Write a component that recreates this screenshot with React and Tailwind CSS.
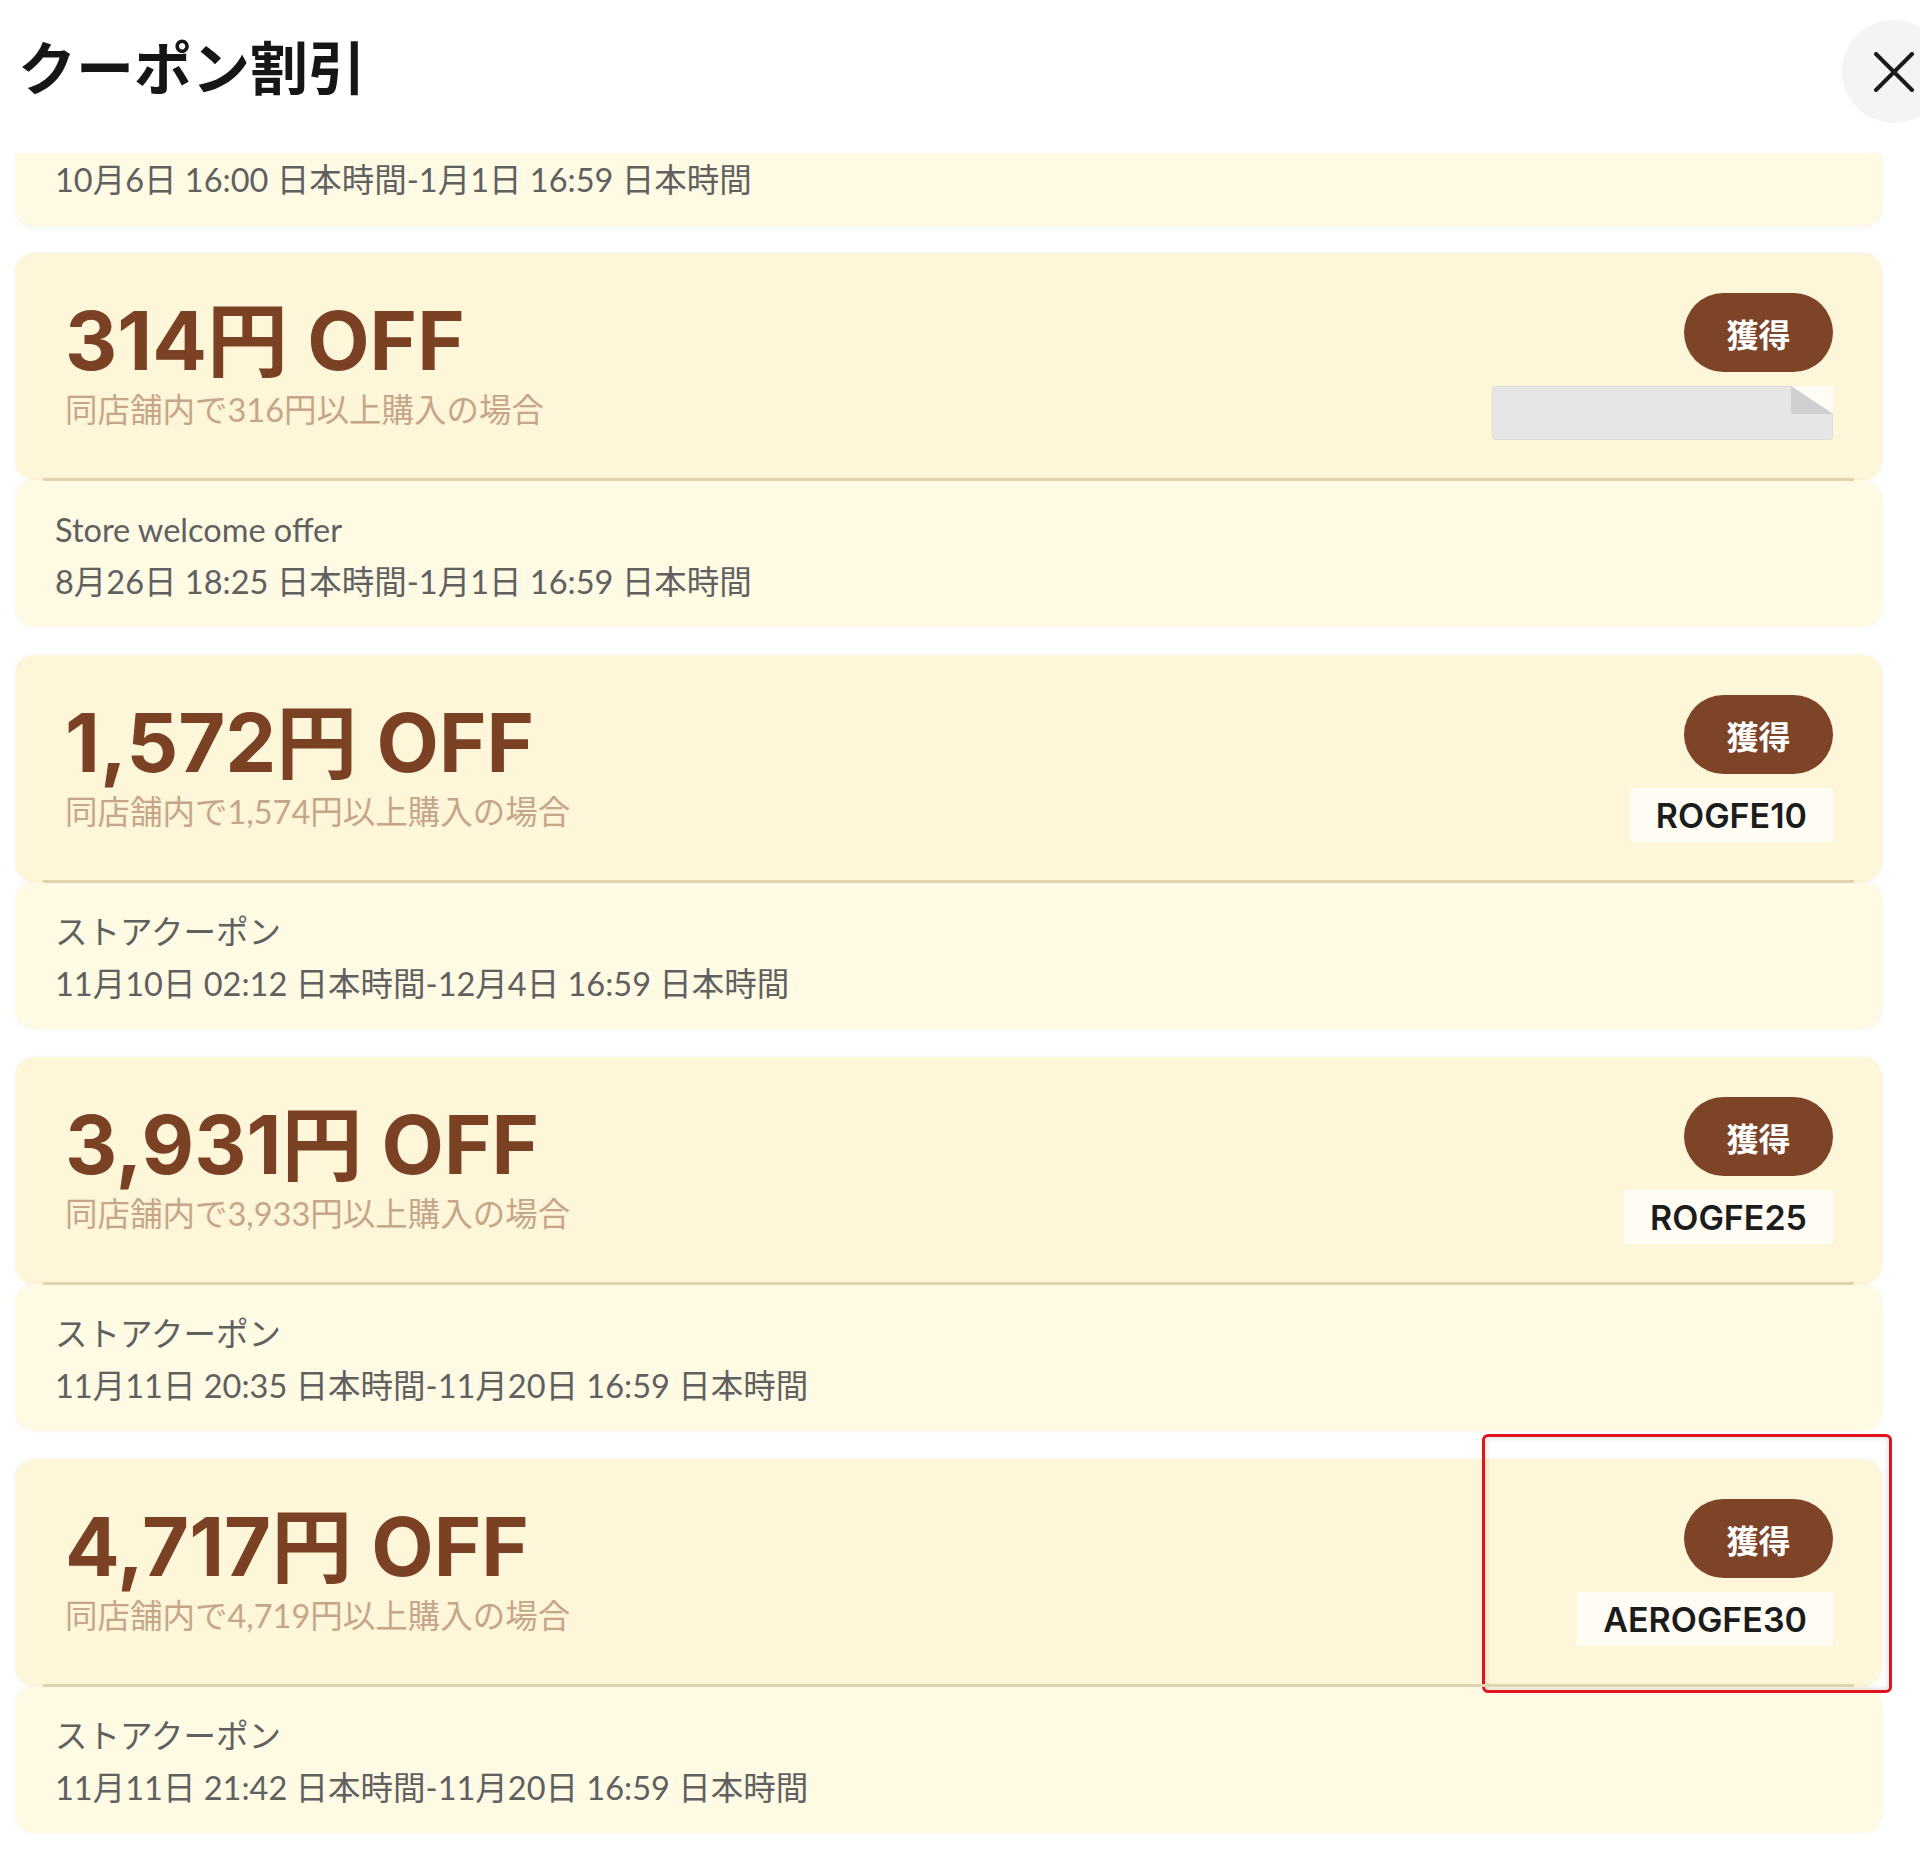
import React from 'react';

const coupons = [
  {
    amount: '314',
    cond: '同店舗内で316円以上購入の場合',
    code: null,
    label: 'Store welcome offer',
    period: '8月26日 18:25 日本時間-1月1日 16:59 日本時間',
  },
  {
    amount: '1,572',
    cond: '同店舗内で1,574円以上購入の場合',
    code: 'ROGFE10',
    label: 'ストアクーポン',
    period: '11月10日 02:12 日本時間-12月4日 16:59 日本時間',
  },
  {
    amount: '3,931',
    cond: '同店舗内で3,933円以上購入の場合',
    code: 'ROGFE25',
    label: 'ストアクーポン',
    period: '11月11日 20:35 日本時間-11月20日 16:59 日本時間',
  },
  {
    amount: '4,717',
    cond: '同店舗内で4,719円以上購入の場合',
    code: 'AEROGFE30',
    label: 'ストアクーポン',
    period: '11月11日 21:42 日本時間-11月20日 16:59 日本時間',
    marked: true,
  },
];

const Details = ({ label, period }) => (
  <div className="h-[147px] rounded-[20px] bg-[#fffae4] pl-[40px] pt-[24px] text-[32.5px] leading-[52px] text-[#606060] shadow-[0_0_4px_rgba(120,100,40,0.08)]">
    <div>{label}</div>
    <div>{period}</div>
  </div>
);

const HiddenCode = () => (
  <div className="relative w-[341px] h-[54px] rounded-[4px] bg-[#e6e6e6] border border-[#dcdcdc]">
    <svg className="absolute -top-px -right-px" width="42" height="28" viewBox="0 0 42 28">
      <path d="M0 0 L42 0 L42 28 Z" fill="#fffdf6" />
      <path d="M0 0 L42 28 L3 28 Q0 28 0 25 Z" fill="#cfcfcf" />
    </svg>
  </div>
);

const Coupon = ({ c }) => (
  <div className="relative">
    <div className="h-[227px] rounded-[20px] bg-[#fef6d8] flex justify-between pl-[50px] pr-[49px] shadow-[0_0_4px_rgba(120,100,40,0.08)]">
      <div className="pt-[48px]">
        <div className="font-['Inter','Noto_Sans_CJK_JP',sans-serif] font-bold text-[81px] leading-none text-[#7b4124]">
          {c.amount}円 OFF
        </div>
        <div className="mt-[7px] text-[32.5px] leading-[1.3] text-[#c6a68a]">{c.cond}</div>
      </div>
      <div className="pt-[40px] flex flex-col items-end gap-[14px]">
        <button className="w-[149px] h-[79px] rounded-full bg-[#7d4428] text-white text-[32px] font-bold font-['Noto_Sans_CJK_JP',sans-serif]">
          獲得
        </button>
        {c.code ? (
          <div className="h-[54px] px-[26px] flex items-center bg-[#fffdf3] font-['Inter',sans-serif] font-semibold text-[34px] text-[#1c1c1c]">
            {c.code}
          </div>
        ) : (
          <HiddenCode />
        )}
      </div>
    </div>
    <div className="relative z-10 mx-[28px] h-[3px] -mt-[2px] -mb-[1px] bg-[#e0d3b2]" />
    <Details label={c.label} period={c.period} />
    {c.marked && (
      <div className="absolute left-[1467px] -top-[25px] w-[410px] h-[259px] rounded-[6px] border-[3px] border-[#e0141e] shadow-[inset_0_0_6px_rgba(0,0,0,0.18)] pointer-events-none" />
    )}
  </div>
);

export default function App() {
  return (
    <div className="w-[1920px] h-[1876px] bg-white overflow-hidden font-['Lato','Noto_Sans_CJK_JP',sans-serif]">
      <header className="flex justify-between items-start h-[153px] pl-[18px]">
        <h1 className="pt-[36px] text-[58px] leading-none font-bold text-[#161616] font-['Noto_Sans_CJK_JP',sans-serif]">
          クーポン割引
        </h1>
        <button className="mt-[20px] -mr-[25px] w-[103px] h-[103px] rounded-full bg-[#f4f4f4] flex items-center justify-center">
          <svg width="40" height="40" viewBox="0 0 40 40" fill="none" stroke="#1a1a1a" strokeWidth="4" strokeLinecap="round">
            <path d="M2 2 L38 38 M38 2 L2 38" />
          </svg>
        </button>
      </header>
      <div className="h-[1723px] overflow-hidden pl-[15px] pr-[38px]">
        <div className="flex flex-col gap-[27px]">
          <div className="h-[73px] rounded-b-[20px] bg-[#fffae4] pl-[40px] pt-[1px] text-[32.5px] leading-[52px] text-[#606060] shadow-[0_2px_4px_rgba(120,100,40,0.08)]">
            10月6日 16:00 日本時間-1月1日 16:59 日本時間
          </div>
          <div className="flex flex-col gap-[28px]">
            {coupons.map((c, i) => (
              <Coupon key={i} c={c} />
            ))}
          </div>
        </div>
      </div>
    </div>
  );
}
